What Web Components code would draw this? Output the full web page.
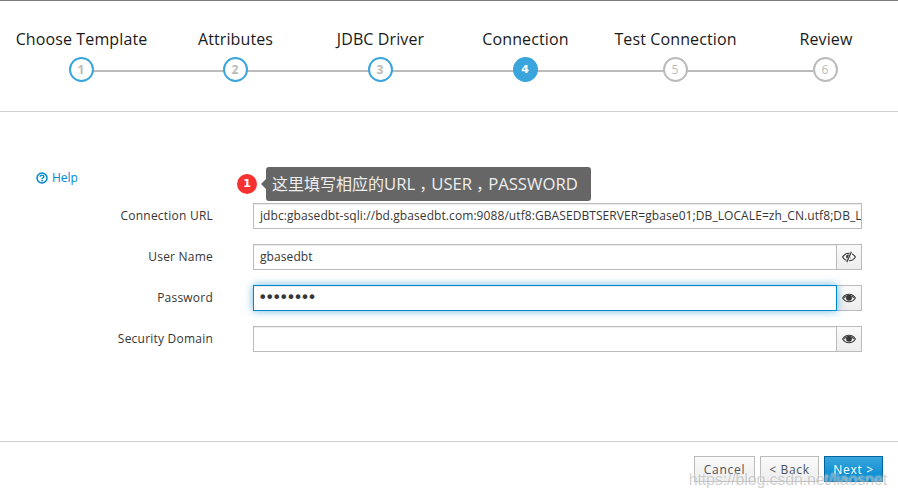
<!DOCTYPE html>
<html>
<head>
<meta charset="utf-8">
<title>Wizard</title>
<style>
  html, body { margin: 0; background: #fff; }
  body { font-family: "Open Sans", "Noto Sans CJK SC", sans-serif; }
</style>
</head>
<body>
<wizard-app>
  <wizard-steps slot="steps">
    <wizard-step num="1" state="done" style="--w:162px">Choose Template</wizard-step>
    <wizard-step num="2" state="done" style="--w:146px">Attributes</wizard-step>
    <wizard-step num="3" state="done" style="--w:144px">JDBC Driver</wizard-step>
    <wizard-step num="4" state="active" style="--w:146px">Connection</wizard-step>
    <wizard-step num="5" style="--w:154px">Test Connection</wizard-step>
    <wizard-step num="6" style="--w:146px;--shift:2px">Review</wizard-step>
  </wizard-steps>

  <help-link slot="help">Help</help-link>
  <form-row slot="form" label="Connection URL" value="jdbc:gbasedbt-sqli://bd.gbasedbt.com:9088/utf8:GBASEDBTSERVER=gbase01;DB_LOCALE=zh_CN.utf8;DB_L"></form-row>
  <form-row slot="form" label="User Name" value="gbasedbt" eye="slash"></form-row>
  <form-row slot="form" label="Password" value="••••••••" eye="open" focused secret></form-row>
  <form-row slot="form" label="Security Domain" value="" eye="open"></form-row>
  <note-tip slot="note" num="1">这里填写相应的<span>URL</span><em>，</em><span>USER</span><em>，</em><span>PASSWORD</span></note-tip>

  <wizard-button slot="footer" style="--w:61px">Cancel</wizard-button>
  <wizard-button slot="footer">&lt; Back</wizard-button>
  <wizard-button slot="footer" primary>Next &gt;</wizard-button>
  <span slot="mark">https://blog.csdn.net/liaosnet</span>
</wizard-app>

<script>
  class WizardApp extends HTMLElement {
    constructor() {
      super();
      this.attachShadow({ mode: 'open' });
    }

    connectedCallback() {
      this.shadowRoot.innerHTML = `
        <style>
          :host {
            display: flex;
            flex-direction: column;
            position: relative;
            height: 499px;
            box-sizing: border-box;
            border-top: 1px solid #7a7a7a;
            overflow: hidden;
            color: #363636;
          }
          header {
            height: 110px;
            border-bottom: 1px solid #d1d1d1;
          }
          main {
            flex: 1;
            position: relative;
            padding: 52px 36px 0 36px;
          }
          .help {
            height: 39px;
          }
          .rows {
            display: flex;
            flex-direction: column;
            gap: 15px;
          }
          footer {
            height: 58px;
            border-top: 1px solid #d1d1d1;
            display: flex;
            justify-content: flex-end;
            gap: 5px;
            padding: 14px 15px 0 0;
            box-sizing: border-box;
          }
          .mark {
            position: absolute;
            right: 11px;
            top: 470px;
            font: 16px "Liberation Sans", Arial, sans-serif;
            letter-spacing: -.15px;
            color: rgba(120, 120, 120, .36);
            text-shadow: 0 0 2px rgba(255, 255, 255, .9);
            white-space: nowrap;
          }
        </style>
        <header><slot name="steps"></slot></header>
        <main>
          <div class="help"><slot name="help"></slot></div>
          <div class="rows"><slot name="form"></slot></div>
          <slot name="note"></slot>
        </main>
        <footer><slot name="footer"></slot></footer>
        <div class="mark"><slot name="mark"></slot></div>
      `;
    }
  }

  class WizardSteps extends HTMLElement {
    constructor() {
      super();
      this.attachShadow({ mode: 'open' });
    }

    connectedCallback() {
      this.shadowRoot.innerHTML = `
        <style>
          :host {
            display: flex;
            position: relative;
            padding-top: 27px;
          }
          :host::before {
            content: '';
            position: absolute;
            left: 81px;
            right: 73px;
            top: 69px;
            height: 2px;
            background: #bbb;
          }
        </style>
        <slot></slot>
      `;
    }
  }

  class WizardStep extends HTMLElement {
    constructor() {
      super();
      this.attachShadow({ mode: 'open' });
    }

    connectedCallback() {
      const num = this.getAttribute('num');
      this.shadowRoot.innerHTML = `
        <style>
          :host {
            display: flex;
            flex-direction: column;
            align-items: center;
            position: relative;
            width: var(--w);
            color: #1a1a1a;
          }
          .label {
            font-size: 16px;
            letter-spacing: .12px;
            line-height: 22px;
            white-space: nowrap;
            margin-bottom: 7px;
            padding-left: var(--shift, 1px);
          }
          .dot {
            width: 25px;
            height: 25px;
            box-sizing: border-box;
            border: 2px solid #bbb;
            border-radius: 50%;
            background: #fff;
            color: #bbb;
            font-size: 12px;
            font-weight: 700;
            line-height: 21px;
            text-align: center;
          }
          :host([state="done"]) .dot { border-color: #39a5dc; }
          :host([state="active"]) .dot {
            border-color: #39a5dc;
            background: #39a5dc;
            color: #fff;
            font: 700 11px/21px "DejaVu Sans", sans-serif;
          }
          :host(:not([state])) .dot { font-weight: 400; }
        </style>
        <div class="label"><slot></slot></div>
        <div class="dot">${num}</div>
      `;
    }
  }

  class HelpLink extends HTMLElement {
    constructor() {
      super();
      this.attachShadow({ mode: 'open' });
    }

    connectedCallback() {
      this.shadowRoot.innerHTML = `
        <style>
          :host {
            display: inline-flex;
            align-items: center;
            gap: 4px;
            color: #0088ce;
            font-size: 12px;
            line-height: 16px;
            margin-top: 6px;
          }
          svg { display: block; }
        </style>
        <svg width="12" height="12" viewBox="0 0 12 12" fill="none" stroke="#0088ce">
          <circle cx="6" cy="6" r="5" stroke-width="1.5"/>
          <path d="M4.100 4.800C4.200 3.600 5 3.100 6 3.100c1.100 0 1.900.6 1.900 1.500 0 1.200-1.900 1.200-1.900 2.600" stroke-width="1.400"/>
          <path d="M6 8v1.500" stroke-width="1.500"/>
        </svg>
        <slot></slot>
      `;
    }
  }

  const EYE = `<path d="M.6 6C2 3.600 4.200 2.200 7 2.200S12 3.600 13.400 6C12 8.400 9.800 9.800 7 9.800S2 8.400.6 6z" fill="none" stroke="#363636" stroke-width="1.100"/>`;
  const ICONS = {
    open: EYE + `<circle cx="7" cy="5.800" r="2.900" fill="#363636"/><path d="M2 6c1.200-1.500 2.600-2.500 5-2.500S10.800 4.500 12 6" fill="none" stroke="#363636" stroke-width="1.200"/>`,
    slash: EYE + `<circle cx="6.400" cy="5.800" r="2.300" fill="#363636"/><path d="M9.600 .8 5 11.200" stroke="#fafafa" stroke-width="2.400"/><path d="M9.400 .8 4.800 11.200" stroke="#363636" stroke-width="1.200"/>`
  };

  class FormRow extends HTMLElement {
    constructor() {
      super();
      this.attachShadow({ mode: 'open' });
    }

    connectedCallback() {
      const eye = this.getAttribute('eye');
      this.shadowRoot.innerHTML = `
        <style>
          :host {
            display: grid;
            grid-template-columns: 177px minmax(0, 1fr);
            column-gap: 40px;
            align-items: center;
            height: 26px;
            font-size: 12px;
          }
          label {
            text-align: right;
            color: #363636;
            letter-spacing: .22px;
            white-space: nowrap;
            padding-bottom: 2px;
          }
          .group { display: flex; height: 26px; }
          .input {
            flex: 1;
            min-width: 0;
            box-sizing: border-box;
            border: 1px solid #bbb;
            padding: 0 6px;
            line-height: 24px;
            letter-spacing: .08px;
            background: #fff;
            color: #363636;
            white-space: nowrap;
            overflow: hidden;
            box-shadow: inset 0 1px 1px rgba(3, 3, 3, .08);
          }
          :host([focused]) .input {
            border-color: #0088ce;
            box-shadow: inset 0 1px 1px rgba(3, 3, 3, .08), 0 0 8px rgba(0, 136, 206, .6);
            position: relative;
          }
          :host([secret]) .input {
            font-family: "DejaVu Sans", sans-serif;
            font-size: 16px;
            letter-spacing: -2.400px;
            padding-left: 4px;
          }
          .eye {
            width: 25px;
            box-sizing: border-box;
            border: 1px solid #bbb;
            border-left: 0;
            background: linear-gradient(#fafafa, #ededed);
            display: flex;
            align-items: center;
            justify-content: center;
          }
        </style>
        <label>${this.getAttribute('label')}</label>
        <div class="group">
          <div class="input">${this.getAttribute('value')}</div>
          ${eye ? `<div class="eye"><svg width="14" height="12" viewBox="0 0 14 12">${ICONS[eye]}</svg></div>` : ''}
        </div>
      `;
    }
  }

  // annotation laid over the form, not part of it
  class NoteTip extends HTMLElement {
    constructor() {
      super();
      this.attachShadow({ mode: 'open' });
    }

    connectedCallback() {
      this.shadowRoot.innerHTML = `
        <style>
          :host {
            position: absolute;
            left: 237px;
            top: 55px;
            display: flex;
            align-items: center;
            gap: 9px;
          }
          .num {
            width: 20px;
            height: 20px;
            border-radius: 50%;
            background: #f73131;
            color: #fff;
            font: 700 11px/20px "DejaVu Sans", sans-serif;
            text-align: center;
          }
          .tip {
            position: relative;
            height: 34px;
            padding: 0 13px 0 6px;
            border-radius: 3px;
            background: #666;
            color: #eee;
            font-family: "Open Sans", "Noto Sans CJK SC", sans-serif;
            font-size: 16px;
            line-height: 34px;
            white-space: nowrap;
          }
          ::slotted(span) {
            font-size: 16.700px;
          }
          /* comma sits in the middle of its cell, not at the left */
          ::slotted(em) {
            font-style: normal;
            padding-left: 4px;
            margin-right: -4px;
          }
          .tip::before {
            content: '';
            position: absolute;
            left: -5px;
            top: 12px;
            border: 5px solid transparent;
            border-left: 0;
            border-right-color: #666;
          }
        </style>
        <div class="num">${this.getAttribute('num')}</div>
        <div class="tip"><slot></slot></div>
      `;
    }
  }

  class WizardButton extends HTMLElement {
    constructor() {
      super();
      this.attachShadow({ mode: 'open' });
    }

    connectedCallback() {
      this.shadowRoot.innerHTML = `
        <style>
          :host {
            display: block;
            box-sizing: border-box;
            height: 26px;
            width: var(--w, 59px);
            border: 1px solid #bbb;
            background: linear-gradient(#fafafa, #ededed);
            color: #4d5258;
            font-size: 12px;
            letter-spacing: .7px;
            line-height: 26px;
            text-align: center;
            white-space: nowrap;
          }
          :host([primary]) {
            border-color: #00659c;
            background: linear-gradient(#39a5dc, #0088ce);
            color: #fff;
          }
        </style>
        <slot></slot>
      `;
    }
  }

  customElements.define('wizard-app', WizardApp);
  customElements.define('wizard-steps', WizardSteps);
  customElements.define('wizard-step', WizardStep);
  customElements.define('help-link', HelpLink);
  customElements.define('form-row', FormRow);
  customElements.define('note-tip', NoteTip);
  customElements.define('wizard-button', WizardButton);
</script>
</body>
</html>
